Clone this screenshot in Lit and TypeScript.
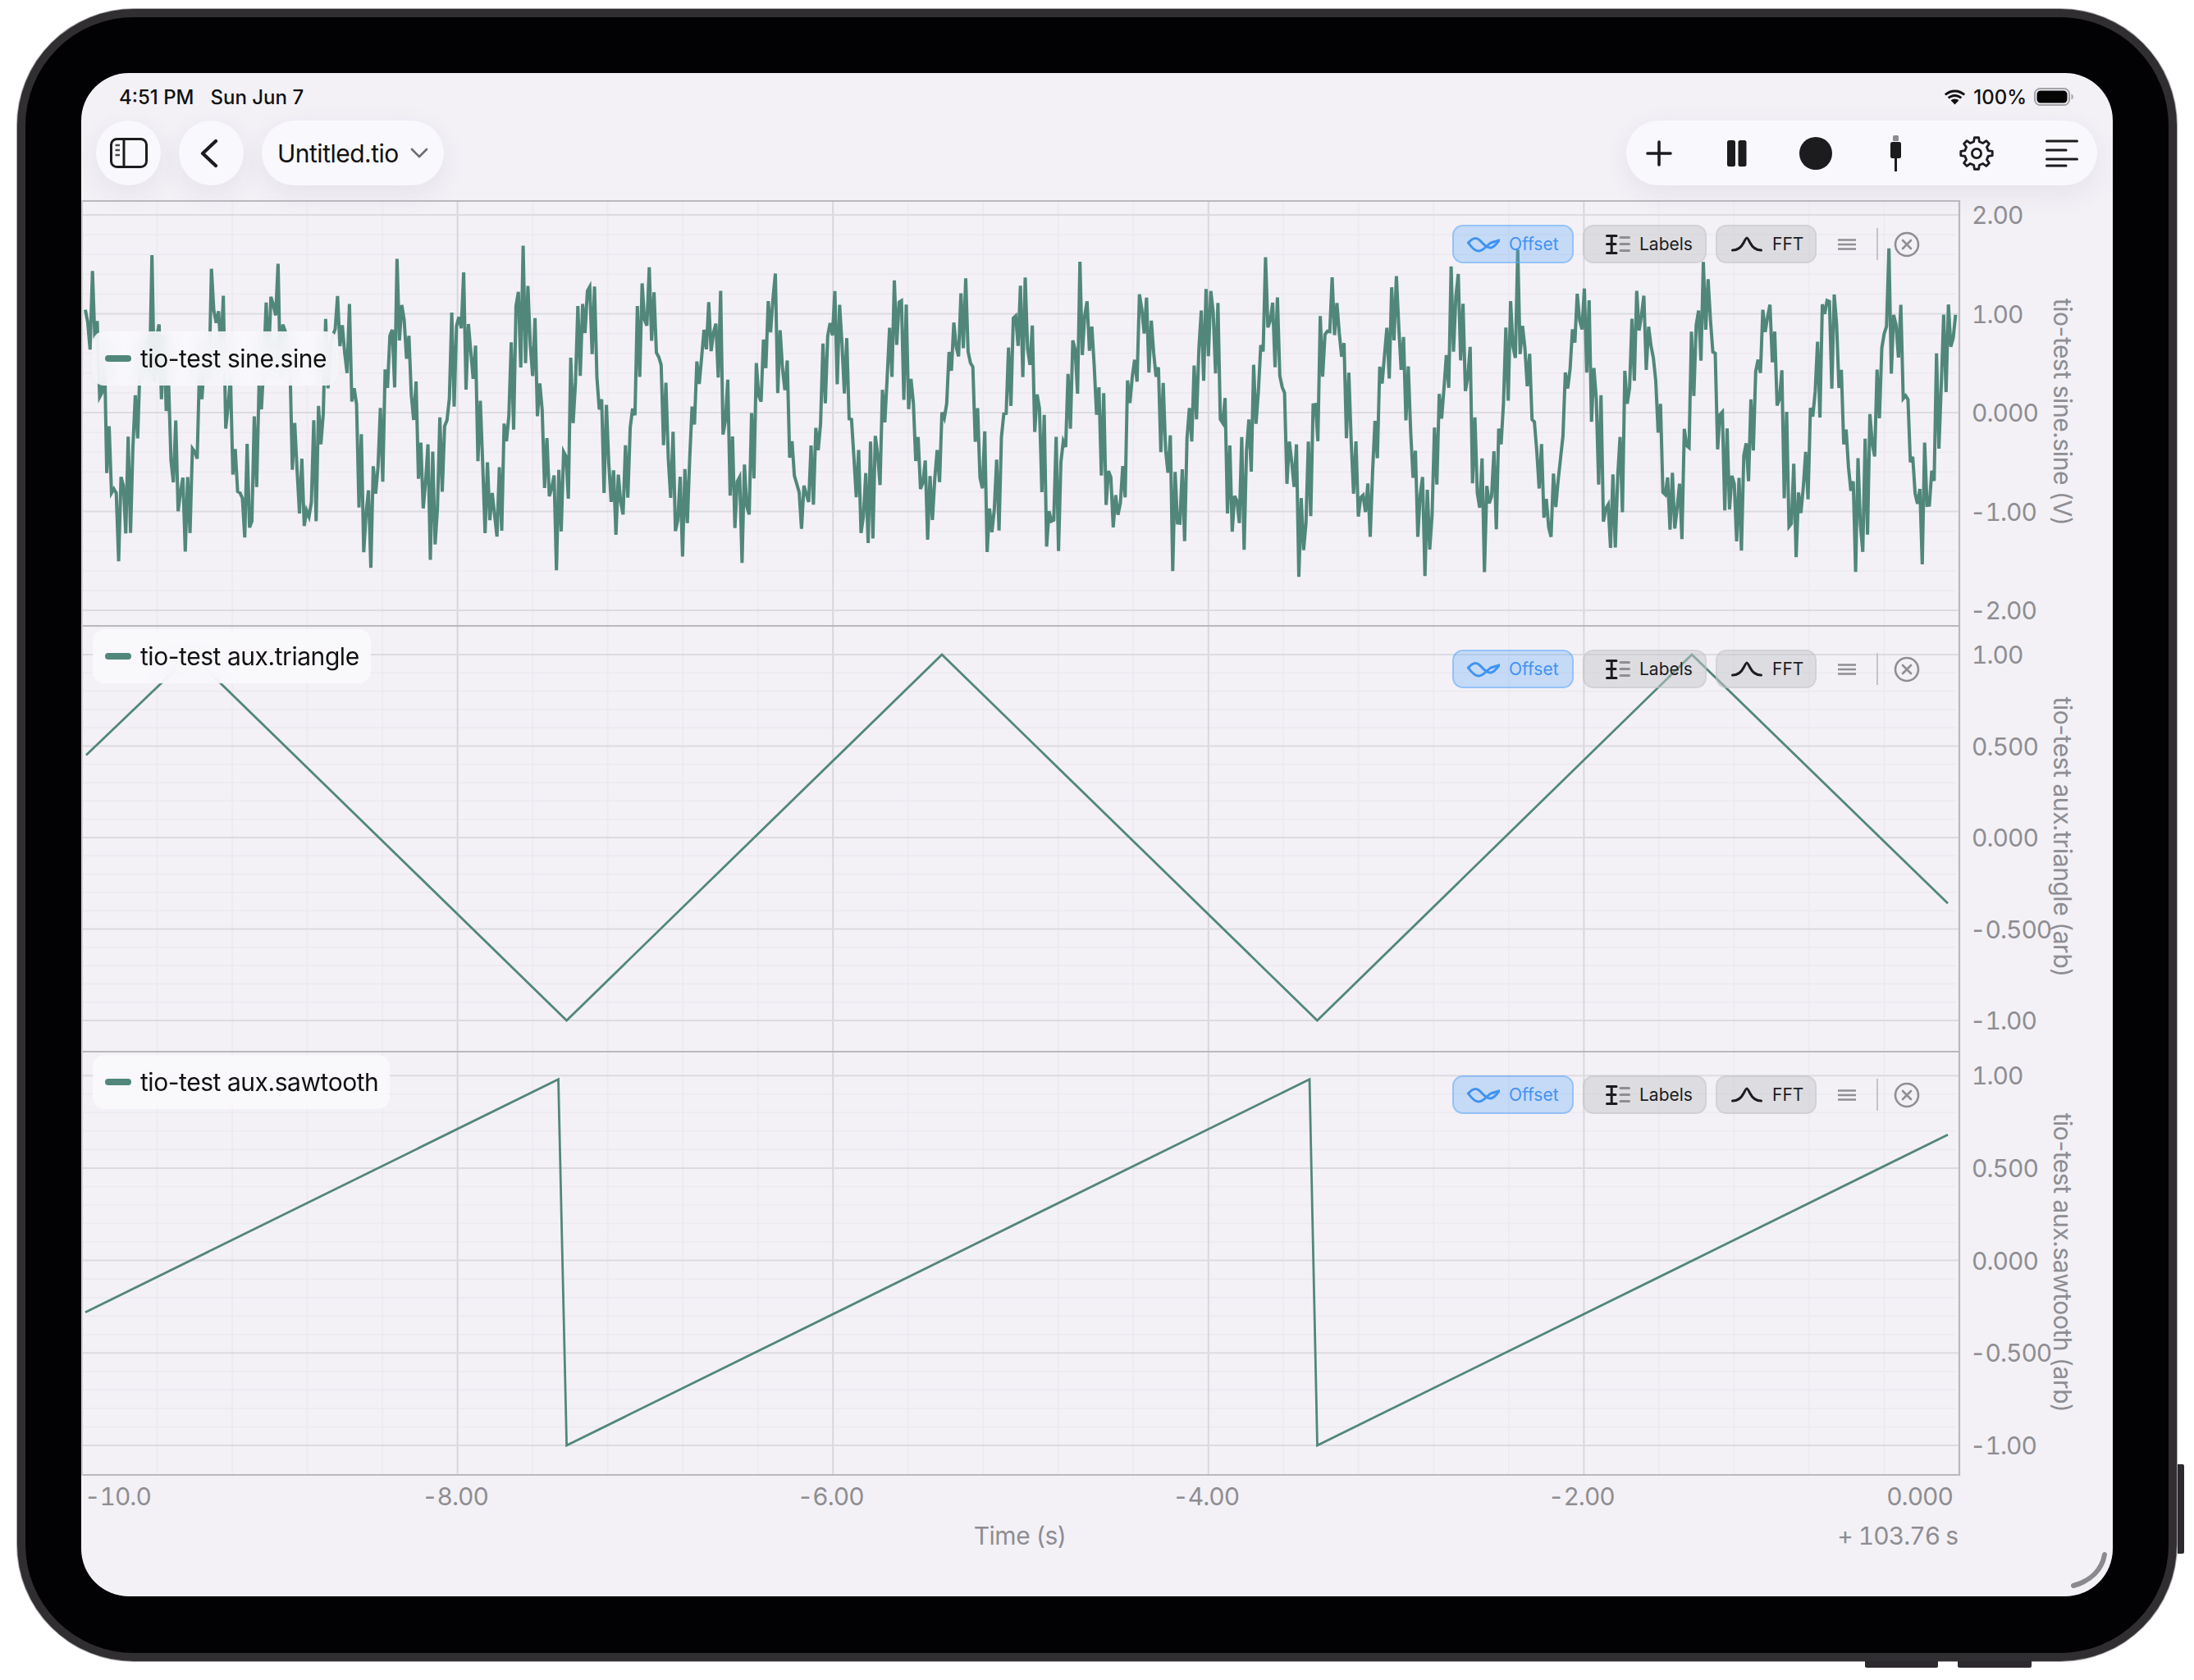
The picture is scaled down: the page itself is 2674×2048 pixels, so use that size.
import { LitElement, css, html, svg } from 'lit';
import { customElement, property } from 'lit/decorators.js';

const PLOT_W = 2289; // screen-left to right plot border
const PX_PER_S = 228.8;
const tx = (t: number) => PLOT_W + t * PX_PER_S;

// fixed seed so every run draws the same noise
function rng(seed: number) {
	return () => {
		seed = (seed + 0x6d2b79f5) | 0;
		let r = Math.imul(seed ^ (seed >>> 15), 1 | seed);
		r = (r + Math.imul(r ^ (r >>> 7), 61 | r)) ^ r;
		return ((r ^ (r >>> 14)) >>> 0) / 4294967296;
	};
}

function sineTrace(): number[][] {
	const rand = rng(4751);
	const pts: number[][] = [];
	for (let x = 5; x <= 2285; x += 2.9) {
		const s = Math.cos(((x - 86) / 75.7) * Math.PI * 2);
		const hf = 0.42 * Math.cos(((x - 86) / 7.3) * Math.PI * 2);
		const noise = (rand() - 0.5) * 0.6;
		pts.push([x, s + hf + noise]);
	}
	return pts;
}

interface RowSpec {
	height: number;
	zero: number;
	unit: number;
	ticks: { v: number; label: string }[];
	name: string;
	axis: string;
	axisY: number;
	legendTop: number;
	points: number[][];
	stroke: number;
	last?: boolean;
}

const ticks1 = [2, 1, 0, -1, -2].map((v) => ({ v, label: v === 0 ? '0.000' : v.toFixed(2) }));
const ticks2 = [1, 0.5, 0, -0.5, -1].map((v) => ({
	v,
	label: Math.abs(v) === 0.5 || v === 0 ? v.toFixed(3) : v.toFixed(2),
}));

const ROWS: RowSpec[] = [
	{
		height: 518,
		zero: 259,
		unit: 120.5,
		ticks: ticks1,
		name: 'tio-test sine.sine',
		axis: 'tio-test sine.sine (V)',
		axisY: 258,
		legendTop: 160,
		points: sineTrace(),
		stroke: 4,
	},
	{
		height: 519,
		zero: 259,
		unit: 223,
		ticks: ticks2,
		name: 'tio-test aux.triangle',
		axis: 'tio-test aux.triangle (arb)',
		axisY: 258,
		legendTop: 5,
		// x is screen-left based, second value is the signal
		points: [
			[6, 0.45],
			[134, 1],
			[591.6, -1],
			[1049, 1],
			[1506.4, -1],
			[1963, 1],
			[2275, -0.36],
		],
		stroke: 2.8,
	},
	{
		height: 518,
		zero: 255.6,
		unit: 225.4,
		ticks: ticks2,
		name: 'tio-test aux.sawtooth',
		axis: 'tio-test aux.sawtooth (arb)',
		axisY: 258,
		legendTop: 5,
		points: [
			[5, -0.28],
			[581.5, 0.98],
			[591.6, -1],
			[1497, 0.98],
			[1506.5, -1],
			[2275, 0.68],
		],
		stroke: 2.8,
		last: true,
	},
];

function gearPath(cx: number, cy: number, outer: number, root: number, teeth: number) {
	const step = (Math.PI * 2) / teeth;
	let d = '';
	for (let i = 0; i < teeth; i++) {
		const a = -Math.PI / 2 + i * step;
		const p = (r: number, da: number) =>
			`${(cx + r * Math.cos(a + da)).toFixed(2)} ${(cy + r * Math.sin(a + da)).toFixed(2)}`;
		d += `${i ? 'L' : 'M'}${p(root, -step * 0.3)} L${p(outer, -step * 0.17)} L${p(outer, step * 0.17)} L${p(root, step * 0.3)} `;
	}
	return d + 'Z';
}

@customElement('plot-row')
export class PlotRow extends LitElement {
	@property({ attribute: false }) spec!: RowSpec;

	private grid() {
		const { height, zero, unit, ticks } = this.spec;
		const ys = ticks.map((t) => zero - t.v * unit);
		const lines = [];
		// minor horizontals, five per major step
		for (let i = 0; i < ys.length - 1; i++) {
			const gap = (ys[i + 1] - ys[i]) / 5;
			for (let k = 1; k < 5; k++) {
				const y = ys[i] + gap * k;
				lines.push(svg`<line class="minor" x1="0" x2=${PLOT_W - 4} y1=${y} y2=${y}></line>`);
			}
		}
		for (let k = 1; k <= 25; k++) {
			const x = PLOT_W - k * 91.52;
			const major = k % 5 === 0;
			lines.push(svg`<line class=${major ? 'vmajor' : 'minor'} x1=${x} x2=${x} y1="0" y2=${height}></line>`);
		}
		for (const y of ys) {
			lines.push(svg`<line class="major" x1="0" x2=${PLOT_W} y1=${y} y2=${y}></line>`);
		}
		return lines;
	}

	render() {
		const { height, zero, unit, ticks, name, axis, axisY, legendTop, points, stroke, last } = this.spec;
		const trace = points.map(([x, v]) => `${x},${(zero - v * unit).toFixed(1)}`).join(' ');
		return html`
			<div class="row" style="height:${height}px">
				<svg class="chart" width="2476" height=${height} viewBox="0 0 2476 ${height}">
					${this.grid()}
					<line class="frame" x1="0" x2=${PLOT_W} y1="1" y2="1"></line>
					${last ? svg`<line class="frame" x1="0" x2=${PLOT_W} y1=${height - 1} y2=${height - 1}></line>` : ''}
					<line class="frame" x1=${PLOT_W} x2=${PLOT_W} y1="0" y2=${height}></line>
					<line class="left" x1="1" x2="1" y1="0" y2=${height}></line>
					<polyline class="trace" points=${trace} stroke-width=${stroke}></polyline>
					${ticks.map(
						(t) => svg`<text class="tick" x=${t.v < 0 ? 2302 : 2304} y=${zero - t.v * unit + 11}>${t.label}</text>`,
					)}
					<text class="axis" transform="translate(2404 ${axisY}) rotate(90)">${axis}</text>
				</svg>
				<div class="legend" style="top:${legendTop}px">
					<span class="swatch"></span>
					<span>${name}</span>
				</div>
				<div class="tools">
					<button class="chip on offset">
						<svg width="40" height="20" viewBox="0 0 40 20" fill="none" stroke="#3f93f2" stroke-width="3" stroke-linecap="round">
							<path d="M1.500 8C5 4 8 2 11 2.500C17 3 21 15 29 14C33 13 37 8 39 5"></path>
							<path d="M1.500 8C5 13 9 18 14 18C20 18 24 11 29 8L39 5"></path>
						</svg>
						<span>Offset</span>
					</button>
					<button class="chip labels">
						<svg width="30" height="24" viewBox="0 0 30 24" fill="none" stroke-width="3" stroke-linecap="round">
							<path stroke="#1c1c1e" d="M1.500 1.500H13M1.500 22.500H13M7.200 1.500V22.500M1.500 11.500H12"></path>
							<path stroke="#8e8e93" d="M18 3.500H28.500M18 11.500H28.500M18 19.500H28.500"></path>
						</svg>
						<span>Labels</span>
					</button>
					<button class="chip fft">
						<svg width="38" height="19" viewBox="0 0 38 19" fill="none" stroke="#1c1c1e" stroke-width="3" stroke-linecap="round">
							<path d="M1.500 17C8 17 12 14 15 8C16.500 5 18 2 19 2C20 2 21.500 5 23 8C26 14 30 17 36.500 17"></path>
						</svg>
						<span>FFT</span>
					</button>
					<svg class="lines" width="22" height="16" viewBox="0 0 22 16" stroke="#8e8e93" stroke-width="2.600">
						<path d="M0 2.500H22M0 8H22M0 13.500H22"></path>
					</svg>
					<span class="divider"></span>
					<svg class="close" width="32" height="32" viewBox="0 0 32 32" fill="none" stroke="#8e8e93" stroke-width="2.600" stroke-linecap="round">
						<circle cx="16" cy="16" r="14"></circle>
						<path d="M11 11L21 21M21 11L11 21"></path>
					</svg>
				</div>
			</div>
		`;
	}

	static styles = css`
		:host {
			display: block;
		}
		.row {
			position: relative;
			font-family: Inter, 'Noto Sans', sans-serif;
		}
		.chart {
			display: block;
		}
		.minor {
			stroke: #eceaef;
			stroke-width: 1.6;
		}
		.major {
			stroke: #dcdbdf;
			stroke-width: 2;
		}
		.vmajor {
			stroke: #d8d7dc;
			stroke-width: 2;
		}
		.frame {
			stroke: #b9b8bd;
			stroke-width: 2.2;
		}
		.left {
			stroke: #cfced3;
			stroke-width: 2;
		}
		.trace {
			fill: none;
			stroke: #51877a;
			stroke-linejoin: miter;
		}
		.tick {
			fill: #8e8d92;
			font-size: 30px;
			font-variant-numeric: tabular-nums;
			letter-spacing: -1px;
		}
		.axis {
			fill: #8e8d92;
			font-size: 30px;
			text-anchor: middle;
			letter-spacing: -0.45px;
		}
		.legend {
			position: absolute;
			left: 14px;
			height: 66px;
			display: flex;
			align-items: center;
			gap: 11px;
			padding: 0 14px 0 15px;
			border-radius: 14px;
			background: rgba(249, 248, 252, 0.88);
			backdrop-filter: blur(10px);
			font-size: 30px;
			letter-spacing: -0.45px;
			color: #111;
		}
		.swatch {
			width: 32px;
			height: 8px;
			border-radius: 4px;
			background: #51877a;
		}
		.tools {
			position: absolute;
			left: 1671px;
			top: 30px;
			display: flex;
			align-items: center;
		}
		.chip {
			box-sizing: border-box;
			height: 47px;
			display: flex;
			align-items: center;
			padding: 0;
			margin-right: 11px;
			border-radius: 13px;
			border: 2px solid rgba(190, 189, 194, 0.35);
			background: rgba(200, 199, 204, 0.5);
			font: 21px Inter, 'Noto Sans', sans-serif;
			color: #1c1c1e;
		}
		.chip.on {
			background: rgba(90, 165, 250, 0.3);
			border-color: rgba(90, 165, 250, 0.45);
			color: #3f93f2;
		}
		.offset {
			width: 148px;
			padding-left: 16px;
			gap: 11px;
		}
		.labels {
			width: 151px;
			padding-left: 26px;
			gap: 11px;
		}
		.fft {
			width: 123px;
			padding-left: 17px;
			gap: 12px;
		}
		.lines {
			margin-left: 15px;
		}
		.divider {
			width: 1.500px;
			height: 39px;
			margin-left: 25px;
			background: #c4c3c8;
		}
		.close {
			margin-left: 19px;
		}
	`;
}

@customElement('app-root')
export class AppRoot extends LitElement {
	private toolbarLeft() {
		return html`
			<div class="group">
				<button class="round">
					<svg width="46" height="37" viewBox="0 0 46 37" fill="none" stroke="#1c1c1e" stroke-width="3">
						<rect x="1.500" y="1.500" width="43" height="34" rx="7"></rect>
						<path d="M17 1.500V35.500"></path>
						<path stroke="#48484a" stroke-width="2.600" d="M6.500 9H12M6.500 15H12M6.500 21H12"></path>
					</svg>
				</button>
				<button class="round">
					<svg class="back" width="22" height="36" viewBox="0 0 22 36" fill="none" stroke="#1c1c1e" stroke-width="4.200" stroke-linecap="round" stroke-linejoin="round">
						<path d="M19 3L3 18L19 33"></path>
					</svg>
				</button>
				<button class="title">
					<span>Untitled.tio</span>
					<svg width="22" height="13" viewBox="0 0 22 13" fill="none" stroke="#6c6c70" stroke-width="2.600" stroke-linecap="round" stroke-linejoin="round">
						<path d="M2 2L11 11L20 2"></path>
					</svg>
				</button>
			</div>
		`;
	}

	private toolbarRight() {
		return html`
			<div class="actions">
				<svg width="32" height="32" viewBox="0 0 32 32" stroke="#1c1c1e" stroke-width="3.600" stroke-linecap="round">
					<path d="M16 2V30M2 16H30"></path>
				</svg>
				<svg width="24" height="32" viewBox="0 0 24 32" fill="#1c1c1e">
					<rect x="0" y="0" width="10" height="32" rx="2.500"></rect>
					<rect x="13.500" y="0" width="10" height="32" rx="2.500"></rect>
				</svg>
				<svg class="rec" width="40" height="40" viewBox="0 0 40 40" fill="#1c1c1e"><circle cx="20" cy="20" r="20"></circle></svg>
				<svg width="13" height="44" viewBox="0 0 13 44">
					<rect x="3" y="0" width="7" height="7" rx="1.500" fill="#8c8c90"></rect>
					<rect x="0" y="8" width="13" height="20" rx="2.500" fill="#1c1c1e"></rect>
					<rect x="5" y="27" width="3" height="17" fill="#1c1c1e"></rect>
				</svg>
				<svg class="gear" width="42" height="42" viewBox="0 0 42 42" fill="none" stroke="#1c1c1e" stroke-width="2.800" stroke-linejoin="round">
					<path d=${gearPath(21, 21, 19.4, 14.6, 8)}></path>
					<circle cx="21" cy="21" r="5.600"></circle>
				</svg>
				<svg width="40" height="34" viewBox="0 0 40 34" stroke="#1c1c1e" stroke-width="3.200" stroke-linecap="round">
					<path d="M1.600 2H38.400M1.600 13H25M1.600 24H38.400M1.600 32H25"></path>
				</svg>
			</div>
		`;
	}

	private xAxis() {
		const labels = [
			{ t: -8, s: '-8.00' },
			{ t: -6, s: '-6.00' },
			{ t: -4, s: '-4.00' },
			{ t: -2, s: '-2.00' },
		];
		return html`
			<svg class="xaxis" width="2476" height="100" viewBox="0 0 2476 100">
				<text class="num" x="4" y="36">-10.0</text>
				${labels.map((l) => svg`<text class="num mid" x=${tx(l.t) - 3} y="36">${l.s}</text>`)}
				<text class="num end" x="2281" y="36">0.000</text>
				<text class="mid time" x="1144" y="84">Time (s)</text>
				<text class="num end" x="2287" y="84">+ 103.76 s</text>
			</svg>
		`;
	}

	render() {
		return html`
			<div class="device">
				<span class="side"></span>
				<span class="vol one"></span>
				<span class="vol two"></span>
				<div class="screen">
					<div class="status">
						<div class="clock"><span>4:51 PM</span><span>Sun Jun 7</span></div>
						<div class="state">
							<svg width="27" height="19" viewBox="0 0 27 19" fill="#111">
								<path d="M13.500 3.400c4.100 0 7.900 1.600 10.700 4.200l2-2.100C22.800 2.300 18.300 .4 13.500 .4S4.200 2.300 .8 5.500l2 2.100C5.600 5 9.400 3.400 13.500 3.400z"></path>
								<path d="M13.500 9c2.600 0 5 1 6.800 2.600l2-2.100C19.900 7.300 16.800 6 13.500 6S7.100 7.300 4.700 9.500l2 2.100C8.500 10 10.900 9 13.500 9z"></path>
								<path d="M13.500 11.600c-1.900 0-3.500.7-4.800 1.800l4.800 5.100 4.800-5.100c-1.300-1.100-2.900-1.800-4.800-1.800z"></path>
							</svg>
							<span>100%</span>
							<svg width="48" height="22" viewBox="0 0 48 22">
								<rect x="1" y="1" width="42" height="20" rx="6.500" fill="none" stroke="#a3a3a6" stroke-width="2"></rect>
								<rect x="3.500" y="3.500" width="37" height="15" rx="4.500" fill="#050505"></rect>
								<path d="M45.500 7.500c1.500.5 2.300 2 2.300 3.500s-.8 3-2.300 3.500z" fill="#a3a3a6"></path>
							</svg>
						</div>
					</div>
					<div class="toolbar">${this.toolbarLeft()}${this.toolbarRight()}</div>
					<div class="plots">
						${ROWS.map((r) => html`<plot-row .spec=${r}></plot-row>`)}
						${this.xAxis()}
					</div>
					<svg class="corner" width="50" height="50" viewBox="0 0 50 50" fill="none" stroke="#8a8a8d" stroke-width="6" stroke-linecap="round">
						<path d="M44 6C41 24 28 38 6 44"></path>
					</svg>
				</div>
			</div>
		`;
	}

	static styles = css`
		:host {
			display: block;
			width: 2674px;
			height: 2048px;
			background: #fff;
			font-family: Inter, 'Noto Sans', sans-serif;
		}
		.device {
			position: absolute;
			left: 21px;
			top: 11px;
			box-sizing: border-box;
			width: 2632px;
			height: 2014px;
			padding: 68px 68px 69px;
			border: 10px solid #302e31;
			border-radius: 142px;
			background: #020104;
			box-shadow: 0 0 0 1px #a5a5a8;
		}
		.side {
			position: absolute;
			right: -19px;
			top: 1764px;
			width: 8px;
			height: 109px;
			background: #2c2a2e;
			border-radius: 0 2px 2px 0;
		}
		.vol {
			position: absolute;
			top: 2004px;
			height: 8px;
			background: #2c2a2e;
			border-radius: 0 0 2px 2px;
		}
		.vol.one {
			left: 2242px;
			width: 89px;
		}
		.vol.two {
			left: 2355px;
			width: 90px;
		}
		.screen {
			position: relative;
			width: 2476px;
			height: 1857px;
			border-radius: 58px;
			overflow: hidden;
			background: #f3f1f6;
			display: flex;
			flex-direction: column;
		}
		.status {
			height: 58px;
			display: flex;
			justify-content: space-between;
			align-items: center;
			padding: 0 48px 0 46px;
			box-sizing: border-box;
			font-size: 24px;
			font-weight: 500;
			color: #111;
		}
		.clock {
			display: flex;
			gap: 20px;
		}
		.state {
			display: flex;
			align-items: center;
			gap: 9px;
		}
		.toolbar {
			height: 79px;
			margin-bottom: 18px;
			display: flex;
			justify-content: space-between;
			padding: 0 19px 0 18px;
		}
		.group {
			display: flex;
			gap: 22px;
		}
		button {
			border: 0;
			padding: 0;
			font: inherit;
		}
		.round,
		.title,
		.actions {
			background: #f9f8fc;
			height: 79px;
			border-radius: 40px;
			box-shadow: 0 10px 34px rgba(60, 55, 80, 0.07);
			display: flex;
			align-items: center;
		}
		.round {
			width: 79px;
			justify-content: center;
		}
		.back {
			margin-right: 6px;
		}
		.title {
			width: 222px;
			padding-left: 19px;
			gap: 14px;
			box-sizing: border-box;
			font-size: 30px;
			letter-spacing: -0.5px;
			color: #111;
		}
		.actions {
			width: 574px;
			box-sizing: border-box;
			padding: 0 23px 0 24px;
			justify-content: space-between;
		}
		.rec {
			transform: translateX(-3px);
		}
		.gear {
			transform: translateX(4px);
		}
		.xaxis {
			display: block;
		}
		.xaxis text {
			fill: #8e8d92;
			font-size: 30px;
		}
		.xaxis .num {
			font-variant-numeric: tabular-nums;
			letter-spacing: -1px;
		}
		.xaxis .time {
			letter-spacing: -0.5px;
		}
		.xaxis .mid {
			text-anchor: middle;
		}
		.xaxis .end {
			text-anchor: end;
		}
		.corner {
			position: absolute;
			right: 4px;
			bottom: 7px;
		}
	`;
}
